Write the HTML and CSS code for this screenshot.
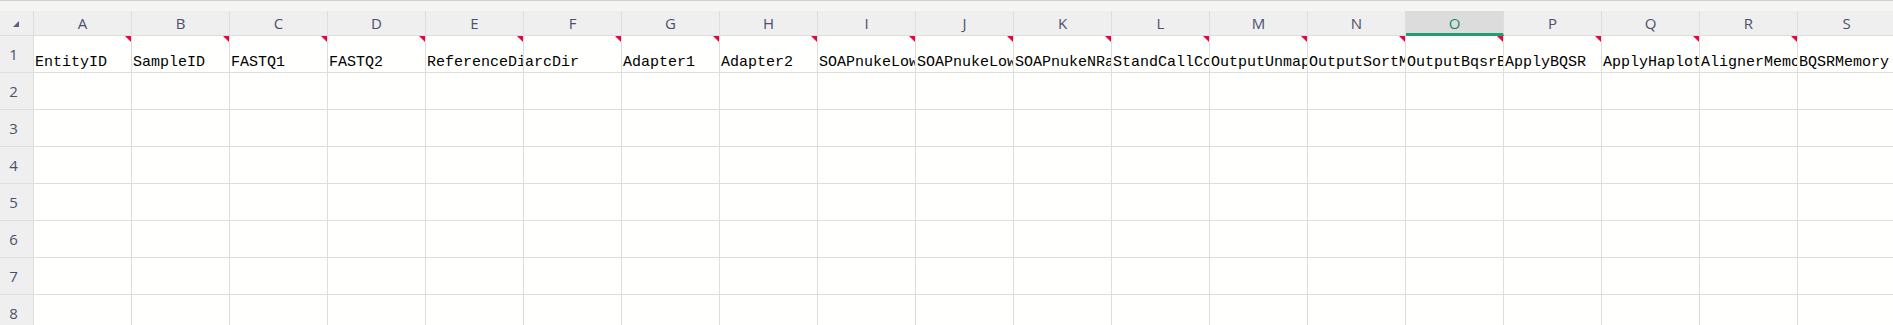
FILE: index.html
```html
<!DOCTYPE html>
<html lang="en">
<head>
    <meta charset="UTF-8">
    <title>Sheet1</title>
    <link rel="stylesheet" href="styles.css">
</head>
<body>

    <!-- strip above the column letters -->
    <div class="topbar"></div>

    <div class="grid" id="grid">
        <div class="corner"><span class="corner-mark"></span></div>
        <div class="col-head">A</div>
        <div class="col-head">B</div>
        <div class="col-head">C</div>
        <div class="col-head">D</div>
        <div class="col-head">E</div>
        <div class="col-head">F</div>
        <div class="col-head">G</div>
        <div class="col-head">H</div>
        <div class="col-head">I</div>
        <div class="col-head">J</div>
        <div class="col-head">K</div>
        <div class="col-head">L</div>
        <div class="col-head">M</div>
        <div class="col-head">N</div>
        <div class="col-head selected">O</div>
        <div class="col-head">P</div>
        <div class="col-head">Q</div>
        <div class="col-head">R</div>
        <div class="col-head">S</div>

        <!-- Row 1: headers of the sample sheet -->
        <div class="row-head">1</div>
        <div class="cell note"><span>EntityID</span></div>
        <div class="cell note"><span>SampleID</span></div>
        <div class="cell note"><span>FASTQ1</span></div>
        <div class="cell note"><span>FASTQ2</span></div>
        <div class="cell note"><span>ReferenceDir</span></div>
        <div class="cell note"><span>arcDir</span></div>
        <div class="cell note"><span>Adapter1</span></div>
        <div class="cell note"><span>Adapter2</span></div>
        <div class="cell note"><span>SOAPnukeLowQual</span></div>
        <div class="cell note"><span>SOAPnukeLowQualRate</span></div>
        <div class="cell note"><span>SOAPnukeNRate</span></div>
        <div class="cell note"><span>StandCallConf</span></div>
        <div class="cell note"><span>OutputUnmapped</span></div>
        <div class="cell note"><span>OutputSortMarkdup</span></div>
        <div class="cell note"><span>OutputBqsrBam</span></div>
        <div class="cell note"><span>ApplyBQSR</span></div>
        <div class="cell note"><span>ApplyHaplotypeCaller</span></div>
        <div class="cell note"><span>AlignerMemory</span></div>
        <div class="cell"><span>BQSRMemory</span></div>
    </div>

    <script>
        // Empty rows 2 - 8
        const grid = document.getElementById('grid');
        for (let row = 2; row <= 8; row++) {
            const head = document.createElement('div');
            head.className = 'row-head';
            head.textContent = row;
            grid.appendChild(head);
            for (let col = 0; col < 19; col++) {
                const cell = document.createElement('div');
                cell.className = 'cell';
                grid.appendChild(cell);
            }
        }
    </script>
</body>
</html>
```

FILE: styles.css
```css
/* Spreadsheet look */
body {
    margin: 0;
    background-color: #fffffd;
    overflow: hidden;
    font-family: "Open Sans", Arial, sans-serif;
}

.topbar {
    height: 10px;
    background-color: #f5f5f3;
    border-top: 1px solid #cfcfcf;
}

.grid {
    display: grid;
    grid-template-columns: 34px repeat(19, 98px);
    grid-template-rows: 25px;
    grid-auto-rows: 37px;
}

.corner,
.col-head,
.row-head,
.cell {
    box-sizing: border-box;
    border-right: 1px solid #dedede;
    border-bottom: 1px solid #dedede;
}

.corner {
    background-color: #efeff0;
    display: flex;
    align-items: center;
    justify-content: center;
    padding: 2px 2px 0 0;
}

.corner-mark {
    width: 0;
    height: 0;
    border-bottom: 6px solid #5b5c80;
    border-left: 6px solid transparent;
}

.col-head {
    background-color: #efeff0;
    color: #4c4f6e;
    font-size: 15px;
    display: flex;
    align-items: center;
    justify-content: center;
}

.col-head.selected {
    background-color: #dcdcdc;
    color: #1b8a68;
    border-bottom: 3px solid #1f9e70;
    padding-top: 2px;
}

.row-head {
    background-color: #efeff0;
    color: #4c4f6e;
    font-size: 15px;
    display: flex;
    align-items: center;
    justify-content: center;
    padding-right: 6px;
}

.cell {
    position: relative;
    background-color: #fffffd;
    display: flex;
    align-items: flex-end;
    padding: 0 0 1px 1px;
    overflow: hidden;
    white-space: nowrap;
    font-family: "Liberation Mono", "Courier New", monospace;
    font-size: 15px;
    line-height: 17px;
    color: #000;
}

/* red comment marker in the top right corner */
.cell.note::after {
    content: "";
    position: absolute;
    top: 0;
    right: 0;
    width: 0;
    height: 0;
    border-top: 6px solid #f0003c;
    border-left: 6px solid transparent;
}
```
